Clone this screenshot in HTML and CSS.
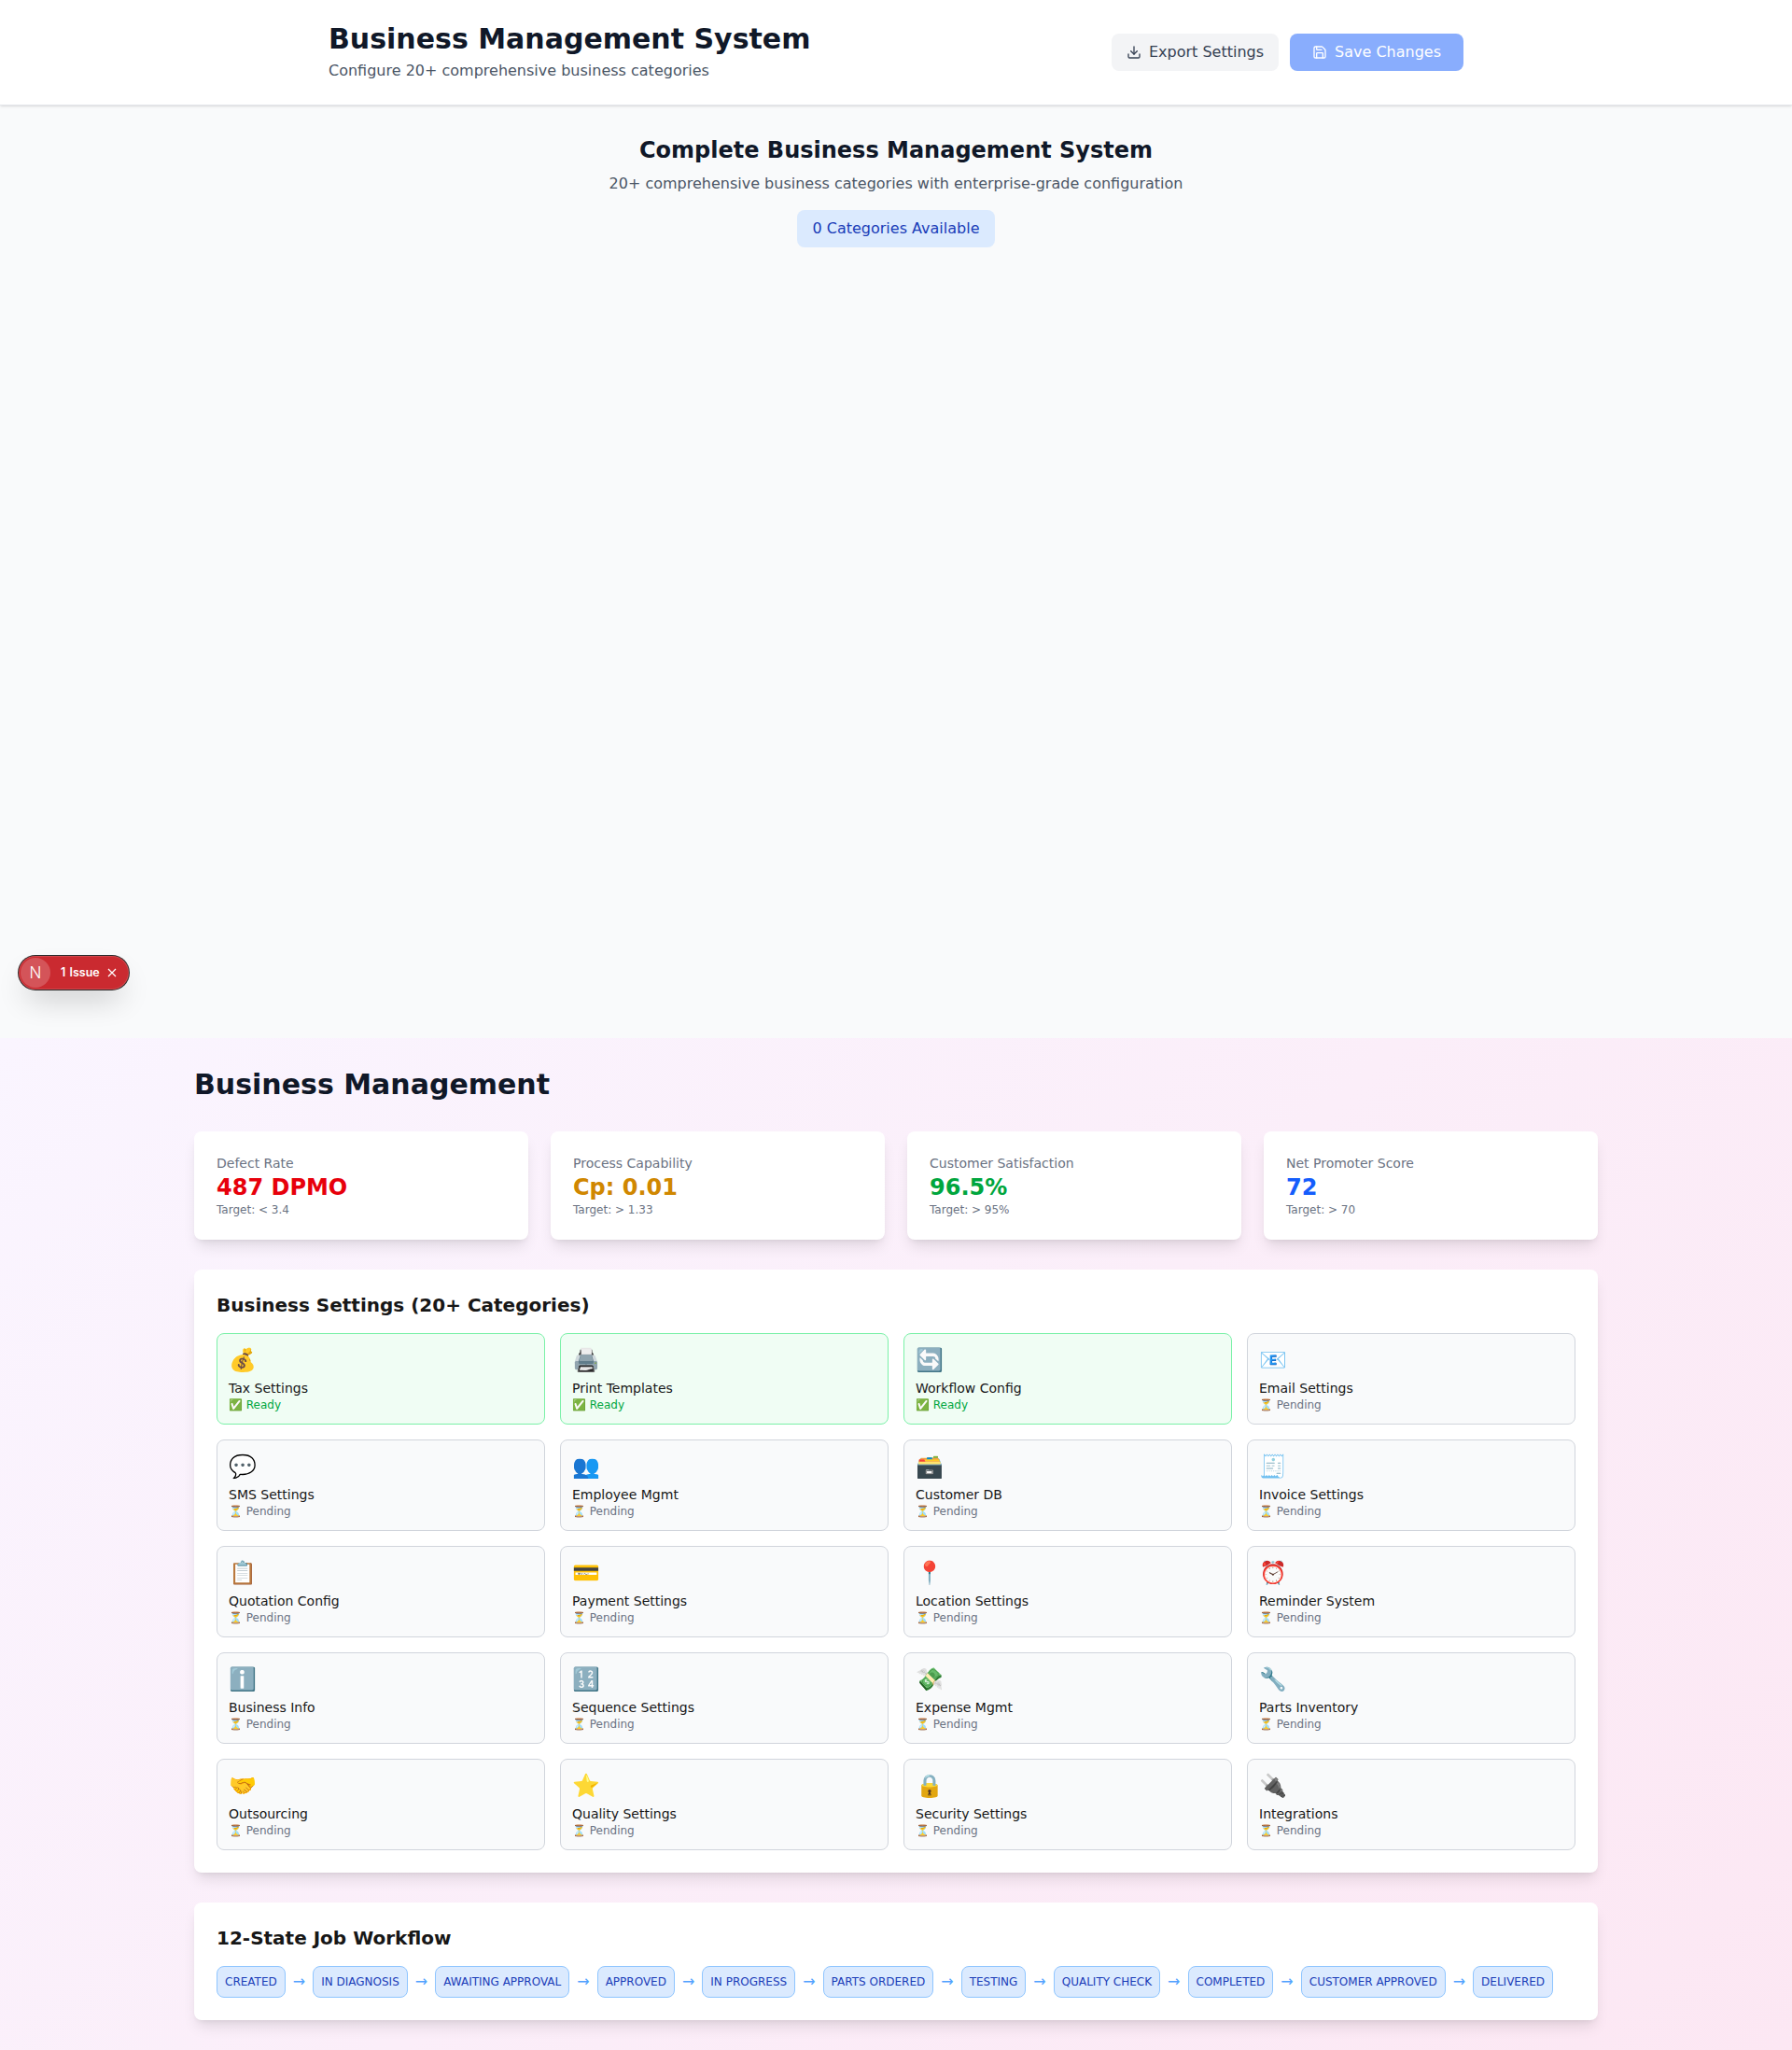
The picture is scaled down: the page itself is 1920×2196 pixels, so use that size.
FILE: index.html
```html
<!DOCTYPE html>
<html lang="en">
<head>
  <meta charset="UTF-8" />
  <meta name="viewport" content="width=device-width, initial-scale=1.0">
  <title>Business Management System</title>
  <link rel="stylesheet" href="styles.css">
</head>
<body>
  <div class="settings-page">
    <header class="top-bar">
      <div class="top-bar-inner">
        <div>
          <h1 class="page-title">Business Management System</h1>
          <p class="page-sub">Configure 20+ comprehensive business categories</p>
        </div>
        <div class="top-actions">
          <button class="btn btn-export">
            <svg class="btn-icon" viewBox="0 0 24 24"><path d="M21 15v4a2 2 0 0 1-2 2H5a2 2 0 0 1-2-2v-4"/><path d="M7 10l5 5 5-5"/><path d="M12 15V3"/></svg>
            Export Settings
          </button>
          <button class="btn btn-save">
            <svg class="btn-icon" viewBox="0 0 24 24"><path d="M15.2 3a2 2 0 0 1 1.4.6l3.8 3.8a2 2 0 0 1 .6 1.4V19a2 2 0 0 1-2 2H5a2 2 0 0 1-2-2V5a2 2 0 0 1 2-2z"/><path d="M17 21v-7a1 1 0 0 0-1-1H8a1 1 0 0 0-1 1v7"/><path d="M7 3v4a1 1 0 0 0 1 1h7"/></svg>
            Save Changes
          </button>
        </div>
      </div>
    </header>

    <section class="intro">
      <h2 class="intro-title">Complete Business Management System</h2>
      <p class="intro-sub">20+ comprehensive business categories with enterprise-grade configuration</p>
      <span class="intro-badge">0 Categories Available</span>
    </section>

    <!-- dev overlay pill -->
    <div class="issue-pill">
      <span class="issue-logo">N</span>
      <span class="issue-text">1 Issue</span>
      <svg class="issue-close" viewBox="0 0 14 14"><path d="M3 3l8 8M11 3l-8 8"/></svg>
    </div>
  </div>

  <main class="dashboard">
    <h1 class="dash-title">Business Management</h1>

    <div class="stat-grid">
      <div class="stat-card">
        <div class="stat-label">Defect Rate</div>
        <div class="stat-value red">487 DPMO</div>
        <div class="stat-target">Target: &lt; 3.4</div>
      </div>
      <div class="stat-card">
        <div class="stat-label">Process Capability</div>
        <div class="stat-value yellow">Cp: 0.01</div>
        <div class="stat-target">Target: &gt; 1.33</div>
      </div>
      <div class="stat-card">
        <div class="stat-label">Customer Satisfaction</div>
        <div class="stat-value green">96.5%</div>
        <div class="stat-target">Target: &gt; 95%</div>
      </div>
      <div class="stat-card">
        <div class="stat-label">Net Promoter Score</div>
        <div class="stat-value blue">72</div>
        <div class="stat-target">Target: &gt; 70</div>
      </div>
    </div>

    <section class="panel">
      <h3 class="panel-title">Business Settings (20+ Categories)</h3>
      <div class="tile-grid">
        <div class="tile ready"><div class="tile-icon">💰</div><div class="tile-name">Tax Settings</div><div class="tile-status">✅ Ready</div></div>
        <div class="tile ready"><div class="tile-icon">🖨️</div><div class="tile-name">Print Templates</div><div class="tile-status">✅ Ready</div></div>
        <div class="tile ready"><div class="tile-icon">🔄</div><div class="tile-name">Workflow Config</div><div class="tile-status">✅ Ready</div></div>
        <div class="tile"><div class="tile-icon">📧</div><div class="tile-name">Email Settings</div><div class="tile-status">⏳ Pending</div></div>
        <div class="tile"><div class="tile-icon">💬</div><div class="tile-name">SMS Settings</div><div class="tile-status">⏳ Pending</div></div>
        <div class="tile"><div class="tile-icon">👥</div><div class="tile-name">Employee Mgmt</div><div class="tile-status">⏳ Pending</div></div>
        <div class="tile"><div class="tile-icon">🗃️</div><div class="tile-name">Customer DB</div><div class="tile-status">⏳ Pending</div></div>
        <div class="tile"><div class="tile-icon">🧾</div><div class="tile-name">Invoice Settings</div><div class="tile-status">⏳ Pending</div></div>
        <div class="tile"><div class="tile-icon">📋</div><div class="tile-name">Quotation Config</div><div class="tile-status">⏳ Pending</div></div>
        <div class="tile"><div class="tile-icon">💳</div><div class="tile-name">Payment Settings</div><div class="tile-status">⏳ Pending</div></div>
        <div class="tile"><div class="tile-icon">📍</div><div class="tile-name">Location Settings</div><div class="tile-status">⏳ Pending</div></div>
        <div class="tile"><div class="tile-icon">⏰</div><div class="tile-name">Reminder System</div><div class="tile-status">⏳ Pending</div></div>
        <div class="tile"><div class="tile-icon">ℹ️</div><div class="tile-name">Business Info</div><div class="tile-status">⏳ Pending</div></div>
        <div class="tile"><div class="tile-icon">🔢</div><div class="tile-name">Sequence Settings</div><div class="tile-status">⏳ Pending</div></div>
        <div class="tile"><div class="tile-icon">💸</div><div class="tile-name">Expense Mgmt</div><div class="tile-status">⏳ Pending</div></div>
        <div class="tile"><div class="tile-icon">🔧</div><div class="tile-name">Parts Inventory</div><div class="tile-status">⏳ Pending</div></div>
        <div class="tile"><div class="tile-icon">🤝</div><div class="tile-name">Outsourcing</div><div class="tile-status">⏳ Pending</div></div>
        <div class="tile"><div class="tile-icon">⭐</div><div class="tile-name">Quality Settings</div><div class="tile-status">⏳ Pending</div></div>
        <div class="tile"><div class="tile-icon">🔒</div><div class="tile-name">Security Settings</div><div class="tile-status">⏳ Pending</div></div>
        <div class="tile"><div class="tile-icon">🔌</div><div class="tile-name">Integrations</div><div class="tile-status">⏳ Pending</div></div>
      </div>
    </section>

    <section class="panel">
      <h3 class="panel-title">12-State Job Workflow</h3>
      <div class="flow">
        <span class="flow-state">CREATED</span><span class="flow-arrow">→</span>
        <span class="flow-state">IN DIAGNOSIS</span><span class="flow-arrow">→</span>
        <span class="flow-state">AWAITING APPROVAL</span><span class="flow-arrow">→</span>
        <span class="flow-state">APPROVED</span><span class="flow-arrow">→</span>
        <span class="flow-state">IN PROGRESS</span><span class="flow-arrow">→</span>
        <span class="flow-state">PARTS ORDERED</span><span class="flow-arrow">→</span>
        <span class="flow-state">TESTING</span><span class="flow-arrow">→</span>
        <span class="flow-state">QUALITY CHECK</span><span class="flow-arrow">→</span>
        <span class="flow-state">COMPLETED</span><span class="flow-arrow">→</span>
        <span class="flow-state">CUSTOMER APPROVED</span><span class="flow-arrow">→</span>
        <span class="flow-state">DELIVERED</span>
      </div>
    </section>
  </main>
</body>
</html>
```

FILE: styles.css
```css
* {
  box-sizing: border-box;
}
body {
  margin: 0;
  font-family: "DejaVu Sans", "Noto Color Emoji", sans-serif;
  font-size: 16px;
  line-height: 24px;
  color: #171717;
  background-color: #fff;
}
h1, h2, h3, p {
  margin: 0;
}

/* top half */
.settings-page {
  position: relative;
  height: 1112px;
  background-color: #f9fafb;
}
.top-bar {
  background-color: #fff;
  border-bottom: 1px solid #e5e7eb;
  box-shadow: 0 1px 3px 0 rgba(0, 0, 0, 0.1), 0 1px 2px -1px rgba(0, 0, 0, 0.1);
}
.top-bar-inner {
  display: flex;
  justify-content: space-between;
  align-items: center;
  max-width: 1216px;
  margin: 0 auto;
  padding: 24px 0;
}
.page-title {
  font-size: 30px;
  line-height: 36px;
  font-weight: 700;
  color: #101828;
}
.page-sub {
  margin-top: 4px;
  color: #4a5565;
}
.top-actions {
  display: flex;
  gap: 12px;
}
.btn {
  display: flex;
  align-items: center;
  gap: 8px;
  height: 40px;
  border: none;
  border-radius: 8px;
  font-family: inherit;
  font-size: 16px;
  line-height: 24px;
}
.btn-icon {
  width: 16px;
  height: 16px;
  fill: none;
  stroke: currentColor;
  stroke-width: 2;
  stroke-linecap: round;
  stroke-linejoin: round;
}
.btn-export {
  padding: 0 16px;
  background-color: #f3f4f6;
  color: #364153;
}
.btn-save {
  padding: 0 24px;
  background-color: #155dfc;
  color: #fff;
  opacity: 0.5;
}
.intro {
  padding-top: 32px;
  text-align: center;
}
.intro-title {
  font-size: 24px;
  line-height: 32px;
  font-weight: 700;
  color: #101828;
}
.intro-sub {
  margin-top: 8px;
  color: #4a5565;
}
.intro-badge {
  display: inline-block;
  margin-top: 16px;
  padding: 8px 16px;
  background-color: #dbeafe;
  color: #193cb8;
  border-radius: 8px;
}
.issue-pill {
  position: absolute;
  left: 20px;
  bottom: 52px;
  display: flex;
  align-items: center;
  width: 118px;
  height: 36px;
  padding: 0 11px 0 2px;
  background-color: #ca2a30;
  border-radius: 18px;
  box-shadow: 0 0 0 1px #2b2b2b, inset 0 0 0 1px rgba(255, 255, 255, 0.14), 0 16px 32px -8px rgba(0, 0, 0, 0.24);
  color: #fff;
}
.issue-logo {
  display: flex;
  align-items: center;
  justify-content: center;
  width: 32px;
  height: 32px;
  border-radius: 50%;
  background-color: rgba(255, 255, 255, 0.2);
  font-family: Inter, sans-serif;
  font-size: 17px;
  font-weight: 300;
}
.issue-text {
  margin-left: 11px;
  font-family: Inter, sans-serif;
  font-size: 12.5px;
  font-weight: 600;
  word-spacing: 1px;
}
.issue-close {
  width: 14px;
  height: 14px;
  margin-left: auto;
  fill: none;
  stroke: #fff;
  stroke-width: 1.2;
}

/* lower half */
.dashboard {
  padding: 32px 208px;
  background: linear-gradient(135deg, #faf5ff, #fce7f3);
}
.dash-title {
  font-size: 30px;
  line-height: 36px;
  font-weight: 700;
  color: #101828;
  margin-bottom: 32px;
}
.stat-grid {
  display: grid;
  grid-template-columns: repeat(4, 1fr);
  gap: 24px;
  margin-bottom: 32px;
}
.stat-card {
  padding: 24px;
  background-color: #fff;
  border-radius: 8px;
  box-shadow: 0 10px 15px -3px rgba(0, 0, 0, 0.1), 0 4px 6px -4px rgba(0, 0, 0, 0.1);
}
.stat-label {
  font-size: 14px;
  line-height: 20px;
  color: #6a7282;
}
.stat-value {
  font-size: 24px;
  line-height: 32px;
  font-weight: 700;
}
.stat-target {
  font-size: 12px;
  line-height: 16px;
  color: #6a7282;
}
.red { color: #e7000b; }
.yellow { color: #d08700; }
.green { color: #00a63e; }
.blue { color: #155dfc; }

.panel {
  padding: 24px;
  background-color: #fff;
  border-radius: 8px;
  box-shadow: 0 10px 15px -3px rgba(0, 0, 0, 0.1), 0 4px 6px -4px rgba(0, 0, 0, 0.1);
}
.panel + .panel {
  margin-top: 32px;
}
.panel-title {
  font-size: 20px;
  line-height: 28px;
  font-weight: 700;
  margin-bottom: 16px;
}
.tile-grid {
  display: grid;
  grid-template-columns: repeat(4, 1fr);
  gap: 16px;
}
.tile {
  padding: 12px;
  background-color: #f9fafb;
  border: 1px solid #d1d5dc;
  border-radius: 8px;
}
.tile-icon {
  font-size: 24px;
  line-height: 32px;
  margin-bottom: 4px;
}
.tile-name {
  font-size: 14px;
  line-height: 20px;
}
.tile-status {
  font-size: 12px;
  line-height: 16px;
  color: #6a7282;
}
.tile.ready {
  background-color: #f0fdf4;
  border-color: #7bf1a8;
}
.tile.ready .tile-status {
  color: #00a63e;
}

.flow {
  display: flex;
  align-items: center;
  gap: 8px;
}
.flow-state {
  padding: 8px;
  font-size: 12px;
  line-height: 16px;
  color: #193cb8;
  background-color: #dbeafe;
  border: 1px solid #8ec5ff;
  border-radius: 8px;
  white-space: nowrap;
}
.flow-arrow {
  color: #51a2ff;
}
```
